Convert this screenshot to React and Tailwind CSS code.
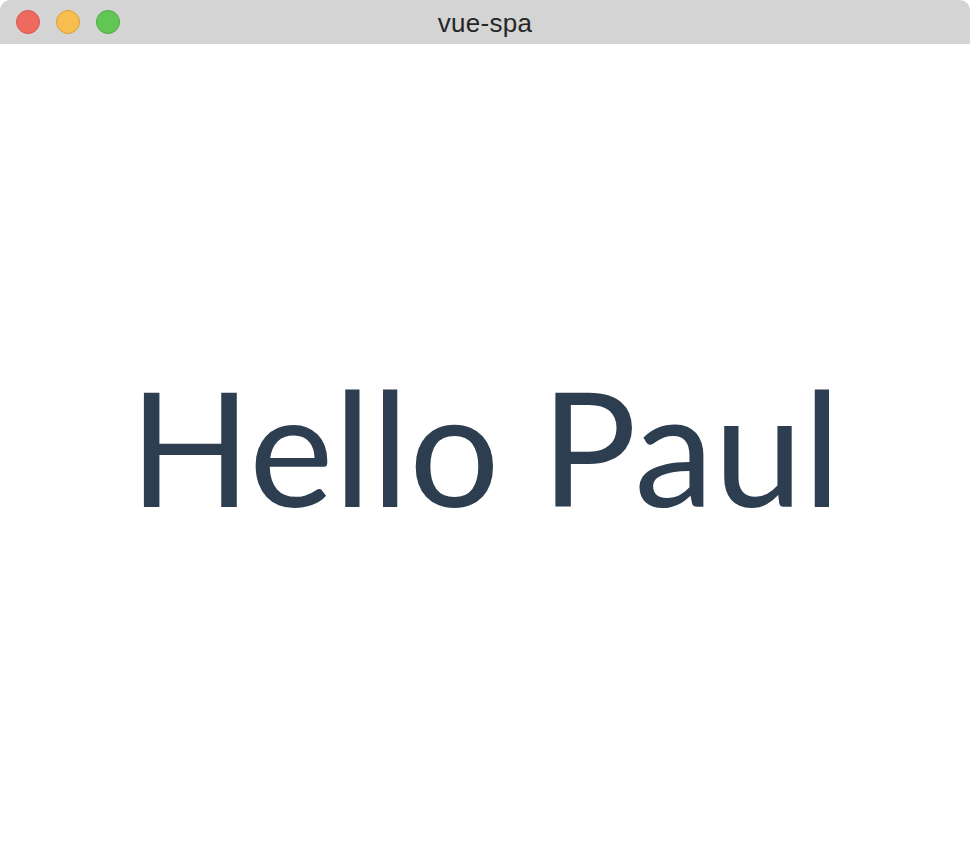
import React from "react";

export default function App() {
  return (
    <div className="w-[970px] h-[849px] bg-white flex flex-col overflow-hidden rounded-t-[10px] rounded-b-[6px]">
      <div className="relative h-[44px] shrink-0 bg-[#d4d4d4] flex items-center justify-center">
        <div className="absolute left-[16px] top-[10px] flex items-center gap-[16px]">
          <span className="w-[24px] h-[24px] rounded-full bg-[#ee6a5f] border border-[#d5564c]" />
          <span className="w-[24px] h-[24px] rounded-full bg-[#f5be4f] border border-[#d8a03d]" />
          <span className="w-[24px] h-[24px] rounded-full bg-[#62c654] border border-[#4ea943]" />
        </div>
        <span className="pt-[3px] text-[26px] tracking-[0.3px] text-[#262626] font-['Helvetica_Neue','Liberation_Sans',sans-serif]">
          vue-spa
        </span>
      </div>
      <div className="flex-1 flex items-center justify-center">
        <h1 className="text-[160px] leading-none text-[#2c3e50] font-normal font-['Lato','Noto_Sans',sans-serif] pb-[4px]">
          Hello Paul
        </h1>
      </div>
    </div>
  );
}
